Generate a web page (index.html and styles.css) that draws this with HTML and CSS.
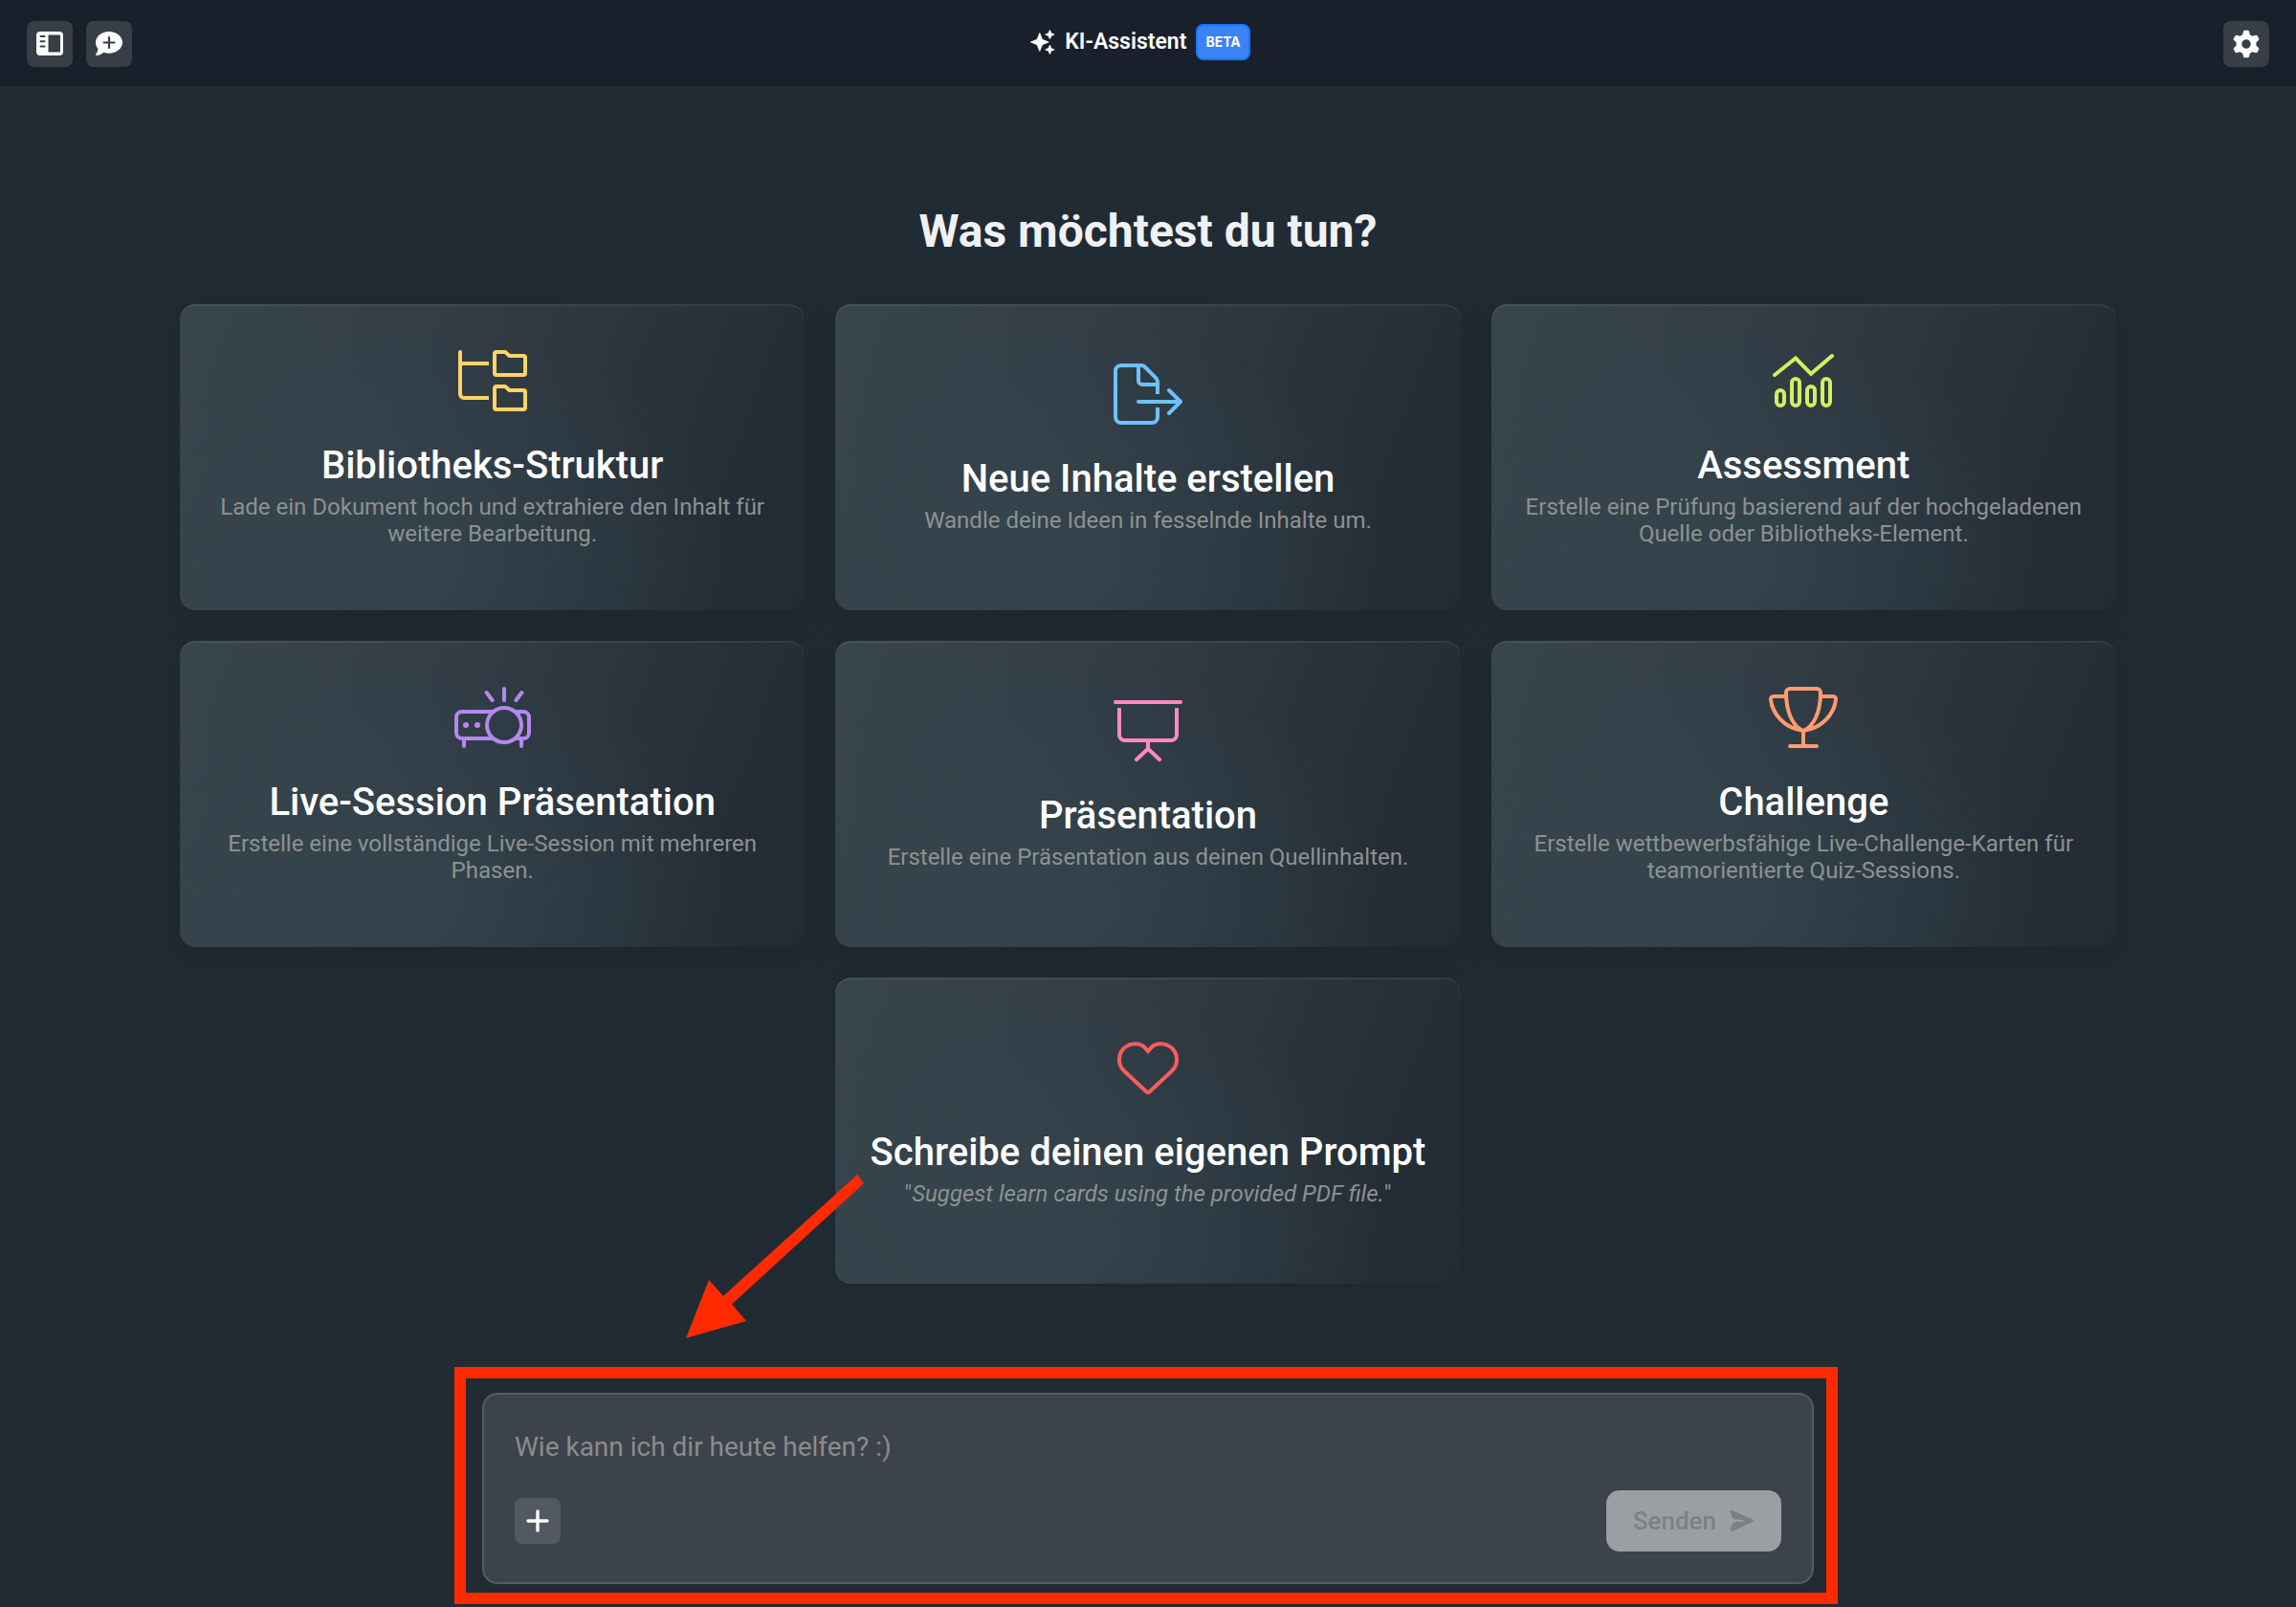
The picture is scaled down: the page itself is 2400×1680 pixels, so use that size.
FILE: index.html
```html
<!DOCTYPE html>
<html lang="de">
<head>
<meta charset="utf-8">
<meta name="viewport" content="width=device-width, initial-scale=1">
<title>KI-Assistent</title>
<link rel="stylesheet" href="styles.css">
</head>
<body>
<header class="topbar">
  <div class="topbar-actions">
    <button class="icon-button" type="button" aria-label="Seitenleiste">
      <svg width="28" height="26" viewBox="0 0 28 26"><path fill="currentColor" fill-rule="evenodd" d="M4 0h20a4 4 0 0 1 4 4v17a4 4 0 0 1-4 4H4a4 4 0 0 1-4-4V4a4 4 0 0 1 4-4zM12.500 3.500v18H24a1 1 0 0 0 1-1v-16a1 1 0 0 0-1-1zM4.500 4a1 1 0 0 0 0 2h4a1 1 0 0 0 0-2zM4.500 9.300a1 1 0 0 0 0 2h4a1 1 0 0 0 0-2zM4.500 14.600a1 1 0 0 0 0 2h4a1 1 0 0 0 0-2z"/></svg>
    </button>
    <button class="icon-button" type="button" aria-label="Neuer Chat">
      <svg width="28" height="26" viewBox="0 0 28 26"><path fill="currentColor" d="M14 0c7.700 0 14 5 14 11.300S21.700 22.700 14 22.700c-2 0-3.900-.3-5.600-.9C6.300 23.300 3.800 25 1 25c-.9 0-1.300-1-.7-1.600C1.500 22 2.400 20.200 2.400 18 .9 16.200 0 13.900 0 11.300 0 5 6.300 0 14 0z"/><path stroke="#373e46" stroke-width="2.200" stroke-linecap="round" d="M14 6v11M8.500 11.500h11"/></svg>
    </button>
  </div>
  <div class="brand">
    <svg width="26" height="26" viewBox="0 0 26 26"><path fill="currentColor" d="M9.800 3.600 12.500 10.300 19.200 13 12.500 15.700 9.800 22.400 7.100 15.700.4 13 7.100 10.300zM20.400.4l1.400 3.300 3.300 1.400-3.300 1.400-1.400 3.300L19 6.500l-3.300-1.400L19 3.700zM20.400 16.200l1.400 3.300 3.300 1.400-3.300 1.400-1.400 3.300-1.400-3.300-3.300-1.400 3.300-1.400z" stroke="currentColor" stroke-width=".8" stroke-linejoin="round"/></svg>
    <span class="brand-name">KI-Assistent</span>
    <span class="badge">BETA</span>
  </div>
  <div class="topbar-actions topbar-end">
    <button class="icon-button" type="button" aria-label="Einstellungen">
      <svg width="28" height="30" viewBox="-14 -15 28 30"><g fill="currentColor"><path id="tooth" d="M-4.200-8-3-13.200a1.600 1.600 0 0 1 1.500-1.100h3A1.600 1.600 0 0 1 3-13.200L4.200-8z"/><use href="#tooth" transform="rotate(60)"/><use href="#tooth" transform="rotate(120)"/><use href="#tooth" transform="rotate(180)"/><use href="#tooth" transform="rotate(240)"/><use href="#tooth" transform="rotate(300)"/></g><circle r="7.500" fill="none" stroke="currentColor" stroke-width="6"/><circle r="4.500" fill="#373e46"/></svg>
    </button>
  </div>
</header>

<main class="content">
  <h1 class="headline">Was möchtest du tun?</h1>

  <nav class="cards" aria-label="Aktionen">
    <a class="card" href="#struktur">
      <svg class="card-icon yellow" width="72" height="64" viewBox="0 0 72 64"><path stroke-linecap="round" d="M2 2v12"/><path d="M2 12v34a4 4 0 0 0 4 4h26M2 14h30"/><path d="M40 2h8.500a2 2 0 0 1 1.400.6l2.800 2.800a2 2 0 0 0 1.400.6H68a2 2 0 0 1 2 2v16a2 2 0 0 1-2 2H40a2 2 0 0 1-2-2V4a2 2 0 0 1 2-2zM40 38h8.500a2 2 0 0 1 1.400.6l2.800 2.800a2 2 0 0 0 1.400.6H68a2 2 0 0 1 2 2v16a2 2 0 0 1-2 2H40a2 2 0 0 1-2-2V40a2 2 0 0 1 2-2z"/></svg>
      <h2 class="card-title">Bibliotheks-Struktur</h2>
      <p class="card-text">Lade ein Dokument hoch und extrahiere den Inhalt für weitere Bearbeitung.</p>
    </a>
    <a class="card" href="#inhalte">
      <svg class="card-icon blue" width="72" height="64" viewBox="0 0 72 64"><path d="M46 32V19.300a6 6 0 0 0-1.760-4.240L32.900 3.760A6 6 0 0 0 28.700 2H8a6 6 0 0 0-6 6v48a6 6 0 0 0 6 6h32a6 6 0 0 0 6-6V46M26 2v16a4 4 0 0 0 4 4h16"/><path stroke-linecap="round" stroke-linejoin="round" d="M26 40h44M58 28l12 12-12 12"/></svg>
      <h2 class="card-title">Neue Inhalte erstellen</h2>
      <p class="card-text">Wandle deine Ideen in fesselnde Inhalte um.</p>
    </a>
    <a class="card" href="#assessment">
      <svg class="card-icon lime" width="64" height="64" viewBox="0 0 64 64"><path stroke-linecap="round" d="M2 26 24 8.500l16 16.300L62 6"/><rect x="4" y="42" width="8" height="16" rx="4"/><rect x="20" y="30" width="8" height="28" rx="4"/><rect x="36" y="38" width="8" height="20" rx="4"/><rect x="52" y="30" width="8" height="28" rx="4"/></svg>
      <h2 class="card-title">Assessment</h2>
      <p class="card-text">Erstelle eine Prüfung basierend auf der hochgeladenen Quelle oder Bibliotheks-Element.</p>
    </a>
    <a class="card" href="#live-session">
      <svg class="card-icon purple" width="80" height="64" viewBox="0 0 80 64"><path d="M41 26H8a6 6 0 0 0-6 6v16a6 6 0 0 0 6 6h33M63 26h9a6 6 0 0 1 6 6v16a6 6 0 0 1-6 6h-9"/><circle cx="52" cy="40" r="18"/><path stroke-linecap="round" d="M10 55v7M70 55v7M52 2v12M33.600 6l6 8M70.400 6l-6 8"/><circle class="dot" cx="12" cy="40" r="3"/><circle class="dot" cx="24" cy="40" r="3"/></svg>
      <h2 class="card-title">Live-Session Präsentation</h2>
      <p class="card-text">Erstelle eine vollständige Live-Session mit mehreren Phasen.</p>
    </a>
    <a class="card" href="#praesentation">
      <svg class="card-icon pink" width="72" height="64" viewBox="0 0 72 64"><path stroke-linecap="round" d="M2 2h68"/><path d="M6 8v28a6 6 0 0 0 6 6h48a6 6 0 0 0 6-6V8M36 42v10"/><path stroke-linecap="round" d="m24 62 12-11.300L48 62"/></svg>
      <h2 class="card-title">Präsentation</h2>
      <p class="card-text">Erstelle eine Präsentation aus deinen Quellinhalten.</p>
    </a>
    <a class="card" href="#challenge">
      <svg class="card-icon orange" width="72" height="64" viewBox="0 0 72 64"><path d="M22 2h28a4 4 0 0 1 4 4C54 28 46 42 36 46 26 42 18 28 18 6a4 4 0 0 1 4-4zM18 10H5a3 3 0 0 0-3 3.200C3.500 28 16 43 36 46M54 10h13a3 3 0 0 1 3 3.200C68.500 28 56 43 36 46v16"/><path stroke-linecap="round" d="M22 62h28"/></svg>
      <h2 class="card-title">Challenge</h2>
      <p class="card-text">Erstelle wettbewerbsfähige Live-Challenge-Karten für teamorientierte Quiz-Sessions.</p>
    </a>
    <a class="card card-custom" href="#prompt">
      <svg class="card-icon red" width="64" height="64" viewBox="0 0 64 64"><path d="m32 15-3.200-3.600C25.300 7.400 20 6.800 15.200 7.600 7.500 9 2 15.600 2 23.400v.4c0 4.600 1.900 8.900 5.200 12l23.100 21.500a2.500 2.500 0 0 0 3.400 0l23.100-21.500c3.300-3.100 5.200-7.400 5.200-12v-.4C62 15.600 56.500 9 48.800 7.600 44 6.800 38.700 7.400 35.200 11.400z"/></svg>
      <h2 class="card-title">Schreibe deinen eigenen Prompt</h2>
      <p class="card-text">"<em>Suggest learn cards using the provided PDF file.</em>"</p>
    </a>
  </nav>

  <form class="composer">
    <textarea class="composer-input" rows="1" aria-label="Nachricht" placeholder="Wie kann ich dir heute helfen? :)"></textarea>
    <div class="composer-bar">
      <button class="icon-button add-button" type="button" aria-label="Hinzufügen">
        <svg width="24" height="24" viewBox="0 0 24 24"><path stroke="currentColor" stroke-width="3.400" stroke-linecap="round" d="M12 2v20M2 12h20"/></svg>
      </button>
      <button class="send-button" type="submit" disabled>
        Senden
        <svg width="26" height="24" viewBox="0 0 26 24"><path fill="currentColor" d="M.6 2.900C.1 1.300 1.700.4 3 1l21 9.600c1.100.5 1.100 2 0 2.500L3 22.800c-1.300.6-2.900-.4-2.400-2l2.400-6.100c.3-.7.900-1.100 1.600-1.200l10-1c.7-.1.700-1.100 0-1.200l-10-1C3.900 10.200 3.300 9.800 3 9.100z"/></svg>
      </button>
    </div>
    <svg class="pointer-arrow" width="188" height="175" viewBox="0 0 188 175" aria-hidden="true"><path fill="#ff2a00" d="M180 2l7 9L49 137.500 64 155 1 173 25 112 40 129z"/></svg>
  </form>
</main>
</body>
</html>
```
FILE: styles.css
```css
* {
  box-sizing: border-box;
}

body {
  margin: 0;
  min-height: 100vh;
  background: #212b34;
  color: #fff;
  font-family: Roboto, "Liberation Sans", sans-serif;
}

button,
textarea {
  font: inherit;
}

svg {
  display: block;
  flex: none;
}

.topbar {
  display: grid;
  grid-template-columns: 1fr auto 1fr;
  align-items: center;
  height: 90px;
  padding: 2px 28px 0;
  background: #1a202b;
}

.topbar-actions {
  display: flex;
  gap: 14px;
}

.topbar-end {
  justify-content: flex-end;
}

.icon-button {
  display: flex;
  align-items: center;
  justify-content: center;
  width: 48px;
  height: 48px;
  padding: 0;
  border: 0;
  border-radius: 8px;
  background: #373e46;
  color: #fff;
}

.brand {
  display: flex;
  align-items: center;
  gap: 10px;
  margin-right: 16px;
  padding-bottom: 4px;
}

.brand-name {
  font-size: 23px;
  line-height: 28px;
  font-weight: 600;
}

.badge {
  padding: 0 8px;
  border: 2px solid #1677ff;
  border-radius: 8px;
  background: #3b82f6;
  font-family: Inter, "Noto Sans", sans-serif;
  font-size: 14px;
  line-height: 34px;
  font-weight: 700;
}

.content {
  display: flex;
  flex-direction: column;
  align-items: center;
  padding: 124px 24px 24px;
}

.headline {
  margin: 0 0 48px;
  color: #f0f1f2;
  font-size: 48px;
  line-height: 56px;
  font-weight: 700;
}

.cards {
  display: grid;
  grid-template-columns: repeat(3, 1fr);
  gap: 32px;
  width: 100%;
  max-width: 2024px;
  margin-bottom: 114px;
}

.card {
  display: flex;
  flex-direction: column;
  align-items: center;
  justify-content: center;
  min-height: 320px;
  padding: 0 32px 18px;
  border-radius: 16px;
  background:
    radial-gradient(ellipse 50% 80% at 38% 86%, rgba(54, 74, 82, 0.6), rgba(54, 74, 82, 0)),
    linear-gradient(110deg, #39454d 0%, #333e47 34%, #2a343d 64%, #252e37 84%, #222b34 100%);
  box-shadow:
    inset 0 2px 0 rgba(255, 255, 255, 0.07),
    0 12px 28px rgba(22, 26, 38, 0.3);
  color: #fff;
  text-align: center;
  text-decoration: none;
}

.card-custom {
  grid-column: 2;
  box-shadow:
    inset 0 2px 0 rgba(255, 255, 255, 0.07),
    0 0 16px rgba(22, 26, 38, 0.15);
}

.card-icon {
  margin-bottom: 32px;
  fill: none;
  stroke: currentColor;
  stroke-width: 4px;
}

.card-icon .dot {
  fill: currentColor;
  stroke: none;
}

.yellow { color: #ffd466; }
.blue { color: #6ec1ff; }
.lime { color: #cff060; }
.purple { color: #b588f0; }
.pink { color: #ff8ac2; }
.orange { color: #ff9c70; }
.red { color: #ff5c5c; }

.card-title {
  margin: 0 0 4px;
  font-size: 40px;
  line-height: 50px;
  font-weight: 500;
}

.card-text {
  margin: 0;
  color: #8e9192;
  font-size: 24px;
  line-height: 28px;
}

.composer {
  position: relative;
  display: flex;
  flex-direction: column;
  gap: 22px;
  width: 100%;
  max-width: 1392px;
  padding: 32px;
  border: 2px solid #555c64;
  border-radius: 16px;
  background: #3d434d;
}

.composer::before {
  content: "";
  position: absolute;
  inset: -29px -27px -23px -31px;
  border: 12px solid #ff2a00;
  pointer-events: none;
}

.composer-input {
  display: block;
  width: 100%;
  height: 46px;
  padding: 0;
  border: 0;
  outline: 0;
  resize: none;
  overflow: hidden;
  background: transparent;
  color: #fff;
  font-size: 28px;
  line-height: 46px;
}

.composer-input::placeholder {
  color: #8c8c8c;
  opacity: 1;
}

.composer-bar {
  display: flex;
  align-items: center;
  justify-content: space-between;
}

.add-button {
  background: #535960;
}

.send-button {
  display: flex;
  align-items: center;
  gap: 14px;
  height: 64px;
  padding: 0 28px;
  border: 0;
  border-radius: 14px;
  background: #9b9fa4;
  color: #7d8186;
  font-size: 26px;
  font-weight: 500;
}

.pointer-arrow {
  position: absolute;
  top: -232px;
  left: 210px;
  pointer-events: none;
}
```
